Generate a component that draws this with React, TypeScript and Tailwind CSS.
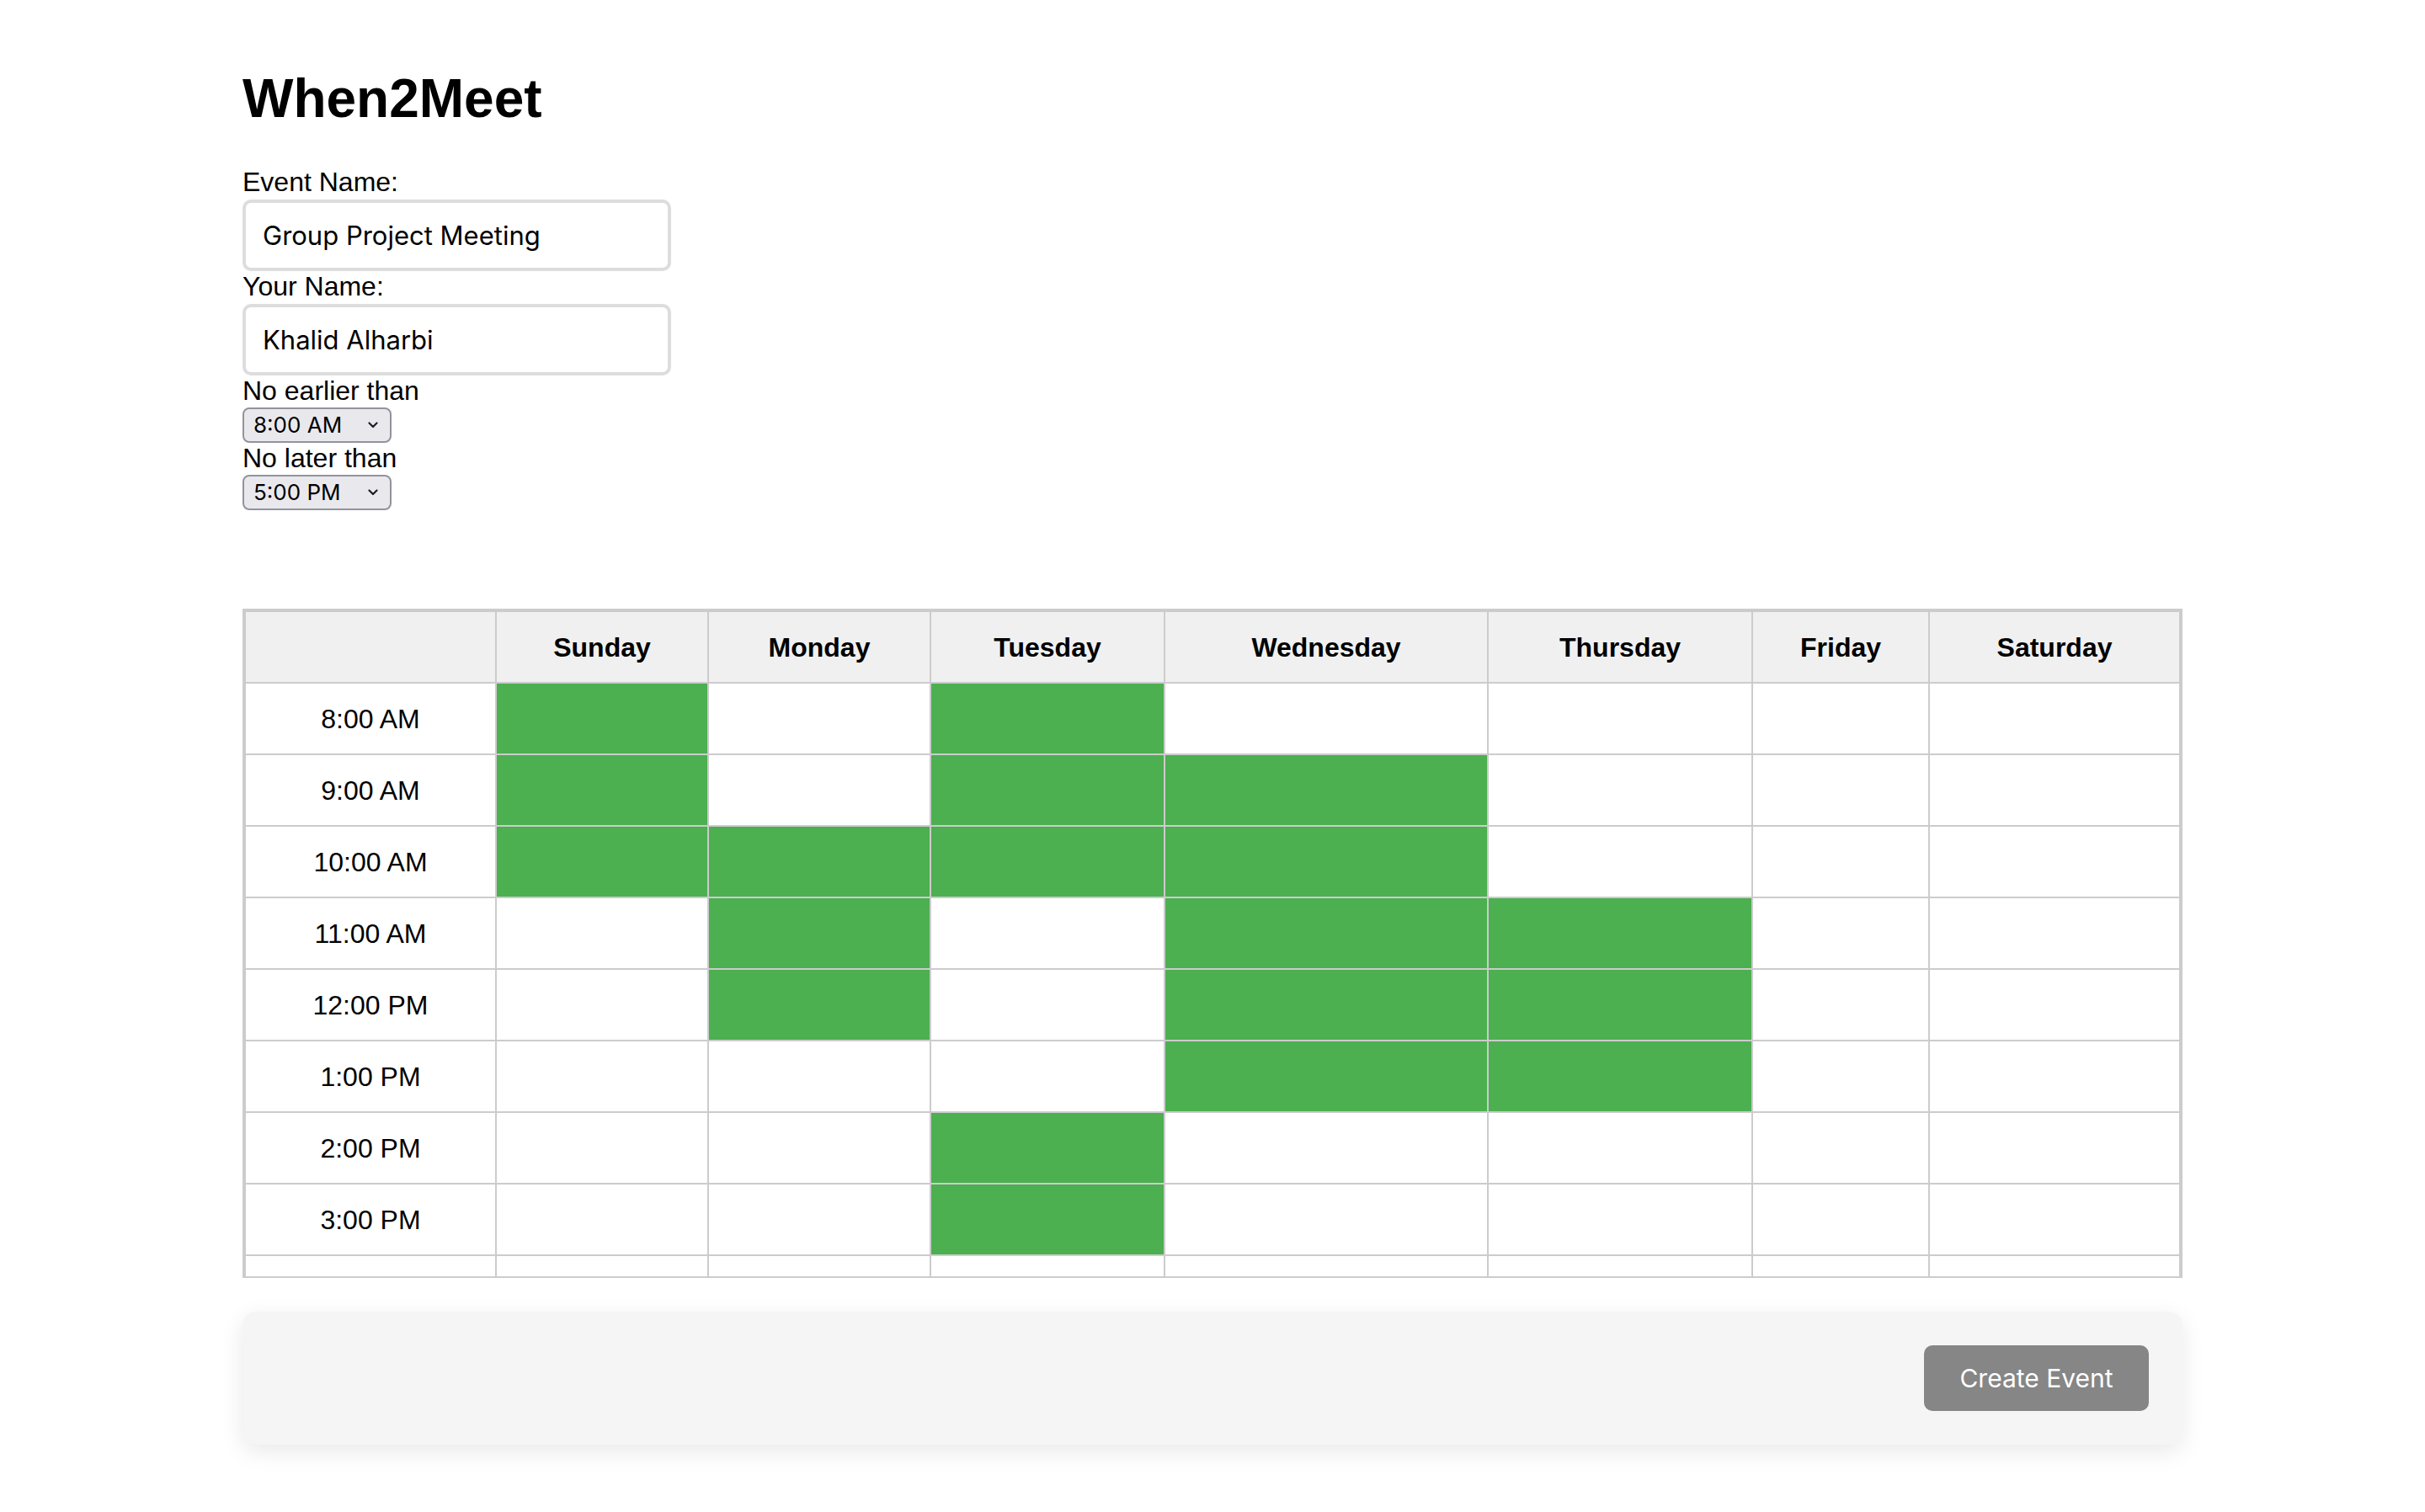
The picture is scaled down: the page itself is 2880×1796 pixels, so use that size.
import React from 'react';

const DAYS = ['Sunday', 'Monday', 'Tuesday', 'Wednesday', 'Thursday', 'Friday', 'Saturday'];
const HOURS = ['8:00 AM', '9:00 AM', '10:00 AM', '11:00 AM', '12:00 PM', '1:00 PM', '2:00 PM', '3:00 PM'];

// widths include the right border of each cell
const COL_WIDTHS = ['w-[298px]', 'w-[252px]', 'w-[264px]', 'w-[278px]', 'w-[384px]', 'w-[314px]', 'w-[210px]', 'w-[298px]'];

// hour index -> days marked available
const AVAILABLE: Record<number, number[]> = {
  0: [0, 2],
  1: [0, 2, 3],
  2: [0, 1, 2, 3],
  3: [1, 3, 4],
  4: [1, 3, 4],
  5: [3, 4],
  6: [2],
  7: [2],
};

const TIME_OPTIONS = ['6:00 AM', '7:00 AM', '8:00 AM', '9:00 AM', '10:00 AM', '3:00 PM', '4:00 PM', '5:00 PM', '6:00 PM'];

function TimeSelect({ value }: { value: string }) {
  return (
    <div className="relative mt-[1px] w-[177px] h-[42px]">
      <select
        defaultValue={value}
        className="appearance-none w-full h-full rounded-[8px] border-2 border-[#93939f] bg-[#e9e9ed] pl-[11px] pr-[30px] text-[26px] leading-[38px] text-black font-['Inter',sans-serif]"
      >
        {TIME_OPTIONS.map((t) => (
          <option key={t}>{t}</option>
        ))}
      </select>
      <svg
        className="pointer-events-none absolute right-[16px] top-[17px]"
        width="12"
        height="8"
        viewBox="0 0 12 8"
        fill="none"
      >
        <path d="M1.5 1.5 L6 6 L10.5 1.5" stroke="#1f1f1f" strokeWidth="2.2" strokeLinecap="round" strokeLinejoin="round" />
      </svg>
    </div>
  );
}

function App() {
  return (
    <div className="min-h-screen bg-white text-black font-['Liberation_Sans',Arial,sans-serif]">
      <div className="w-[80%] mx-auto pt-[80px] pb-[80px]">
        <h1 className="text-[64px] leading-[74px] font-bold">When2Meet</h1>

        {/* Event form */}
        <form className="mt-[44px] flex flex-col items-start" onSubmit={(e) => e.preventDefault()}>
          <label className="block text-[32px] leading-[37px]">Event Name:</label>
          <input
            defaultValue="Group Project Meeting"
            className="mt-[2px] w-[509px] h-[85px] rounded-[10px] border-4 border-[#dddddd] bg-white px-[20px] text-[31px] text-black outline-none font-['Inter',sans-serif]"
          />
          <label className="block text-[32px] leading-[37px]">Your Name:</label>
          <input
            defaultValue="Khalid Alharbi"
            className="mt-[2px] w-[509px] h-[85px] rounded-[10px] border-4 border-[#dddddd] bg-white px-[20px] text-[31px] text-black outline-none font-['Inter',sans-serif]"
          />
          <label className="block text-[32px] leading-[37px]">No earlier than</label>
          <TimeSelect value="8:00 AM" />
          <label className="block text-[32px] leading-[37px]">No later than</label>
          <TimeSelect value="5:00 PM" />
        </form>

        {/* Availability grid, scrolled to the top */}
        <div className="mt-[117px] h-[795px] overflow-hidden border-2 border-[#cccccc]">
          <table className="w-full table-fixed border-separate border-spacing-0 border-l-2 border-t-2 border-[#cccccc] text-[32px]">
            <thead>
              <tr>
                {['', ...DAYS].map((d, i) => (
                  <th
                    key={i}
                    className={`${COL_WIDTHS[i]} h-[85px] p-0 bg-[#f0f0f0] border-r-2 border-b-2 border-[#cccccc] font-bold text-center align-middle`}
                  >
                    {d}
                  </th>
                ))}
              </tr>
            </thead>
            <tbody>
              {HOURS.map((h, r) => (
                <tr key={h}>
                  <td className="h-[85px] p-0 border-r-2 border-b-2 border-[#cccccc] text-center align-middle bg-white">{h}</td>
                  {DAYS.map((d, c) => {
                    const on = (AVAILABLE[r] || []).includes(c);
                    return (
                      <td
                        key={d}
                        className={`h-[85px] p-0 border-r-2 border-b-2 border-[#cccccc] ${on ? 'bg-[#4caf50]' : 'bg-white'}`}
                      />
                    );
                  })}
                </tr>
              ))}
              <tr>
                {['', ...DAYS].map((d, i) => (
                  <td key={i} className="h-[85px] p-0 border-r-2 border-b-2 border-[#cccccc] bg-white" />
                ))}
              </tr>
            </tbody>
          </table>
        </div>

        {/* Footer actions */}
        <div className="mt-[40px] flex justify-end rounded-[16px] bg-[#f5f5f5] p-[40px] shadow-[0_8px_28px_rgba(0,0,0,0.09)]">
          <button
            type="button"
            className="w-[267px] h-[78px] rounded-[10px] bg-[#868686] text-[30px] text-white font-['Inter',sans-serif]"
          >
            Create Event
          </button>
        </div>
      </div>
    </div>
  );
}

export default App;
